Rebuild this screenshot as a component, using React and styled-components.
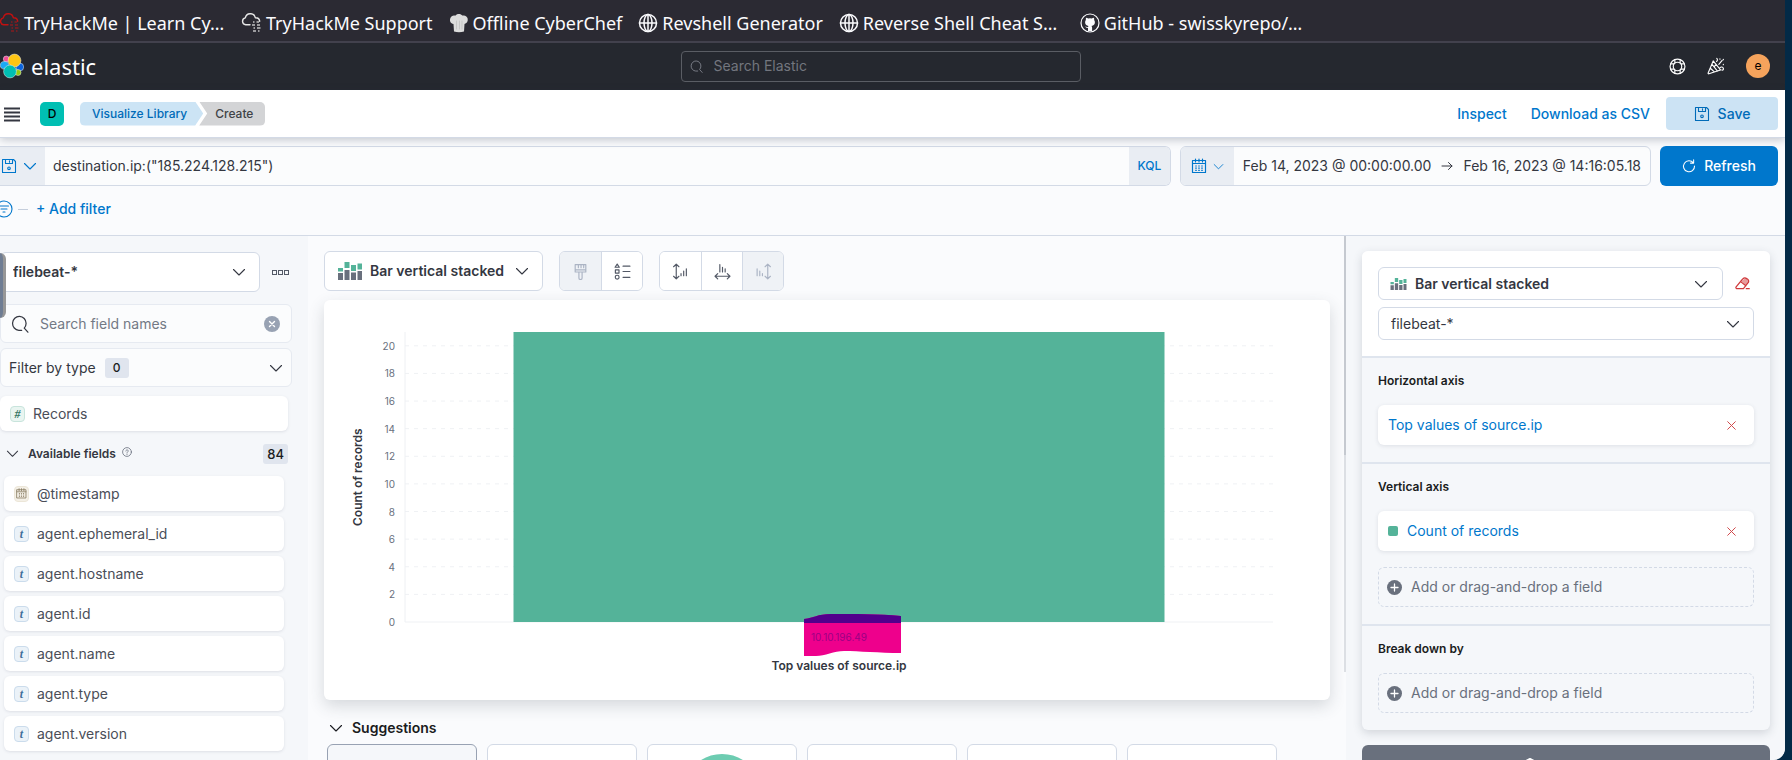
import React from "react";
import styled, { createGlobalStyle, css } from "styled-components";

const Global = createGlobalStyle`
  *, *::before, *::after { box-sizing: border-box; }
  body { margin: 0; background: #032a47; font-family: Inter, "Liberation Sans", sans-serif; font-size: 14px; line-height: 20px; color: #343741; }
  button, input, select { font: inherit; color: inherit; margin: 0; padding: 0; border: 0; background: none; }
  button { cursor: pointer; }
  a { text-decoration: none; }
  svg { display: block; flex: none; }
  h1, h2, h3, ul { margin: 0; padding: 0; font-size: inherit; }
  ul { list-style: none; }
`;

const blue = "#0077cc";
const line = "#d3dae6";

const Shell = styled.div`
  height: 100vh;
  margin-right: 7px;
  display: flex;
  flex-direction: column;
  overflow: hidden;
  border-radius: 0 0 12px 0;
  background: #fafbfd;
`;

/* ---------- bookmarks ---------- */
const Bookmarks = styled.nav`
  display: flex;
  gap: 16px;
  height: 43px;
  padding-top: 5px;
  align-items: center;
  flex: none;
  background: #2b2a33;
  border-bottom: 2px solid #42414d;
`;
const Bookmark = styled.a`
  display: flex;
  align-items: center;
  gap: 4px;
  color: #fbfbfe;
  font: 18px/24px "Noto Sans", sans-serif;
  white-space: nowrap;
`;
const BookmarkLabel = styled.span`
  min-width: ${(p) => (p.$fixed ? "201px" : "0")};
`;

/* ---------- global header ---------- */
const Header = styled.header`
  display: grid;
  grid-template-columns: 1fr 400px 1fr;
  align-items: center;
  height: 47px;
  flex: none;
  padding-right: 24px;
  padding-bottom: 1px;
  background: #25282f;
`;
const Brand = styled.a`
  display: flex;
  align-items: center;
  gap: 7px;
  color: #fff;
  font: 22px/28px "Noto Sans", sans-serif;
`;
const HeaderSearch = styled.label`
  display: flex;
  align-items: center;
  gap: 11px;
  height: 31px;
  padding: 0 8px;
  border: 1px solid #5a5d64;
  border-radius: 4px;
  color: #81858f;
  input { flex: 1; min-width: 0; outline: 0; }
  input::placeholder { color: #73767e; opacity: 1; }
`;
const HeaderTools = styled.div`
  display: flex;
  justify-content: flex-end;
  align-items: center;
  gap: 21px;
  margin-right: -9px;
  color: #fff;
  button { display: flex; }
`;
const Avatar = styled.button`
  width: 24px;
  height: 24px;
  justify-content: center;
  border-radius: 50%;
  background: #f5a35c;
  color: #000;
  font-size: 12px;
  line-height: 24px;
`;

/* ---------- breadcrumb bar ---------- */
const AppBar = styled.div`
  display: flex;
  align-items: center;
  height: 48px;
  flex: none;
  padding: 0 7px 0 4px;
  background: #fff;
  border-bottom: 1px solid ${line};
  box-shadow: 0 2px 8px rgba(40, 50, 70, 0.25);
  z-index: 1;
`;
const MenuButton = styled.button`
  display: flex;
  margin-right: 20px;
`;
const Space = styled.span`
  width: 24px;
  height: 24px;
  margin-right: 16px;
  border-radius: 5px;
  background: #00bfb3;
  color: #000;
  font-size: 12px;
  font-weight: 500;
  line-height: 24px;
  text-align: center;
`;
const Crumbs = styled.nav`
  display: flex;
  font-size: 12px;
  font-weight: 500;
  line-height: 24px;
`;
const Crumb = styled.a`
  padding: 0 16px 0 12px;
  color: #006bb8;
  background: #cce4f5;
  border-radius: 5px 0 0 5px;
  clip-path: polygon(0 0, calc(100% - 8px) 0, 100% 50%, calc(100% - 8px) 100%, 0 100%);
  ${(p) =>
    p.$last &&
    css`
      margin-left: -4px;
      padding: 0 12px 0 16px;
      color: #404347;
      background: #d3d4d6;
      border-radius: 0 5px 5px 0;
      clip-path: polygon(0 0, 100% 0, 100% 100%, 0 100%, 8px 50%);
    `}
`;
const AppActions = styled.div`
  display: flex;
  align-items: center;
  gap: 24px;
  margin-left: auto;
  color: ${blue};
  font-weight: 500;
`;
const SaveButton = styled.button`
  display: flex;
  align-items: center;
  justify-content: center;
  gap: 8px;
  width: 112px;
  height: 33px;
  margin-left: -8px;
  border-radius: 4px;
  background: #cce3f4;
  color: #006bb8;
  font-weight: 500;
`;

/* ---------- query ---------- */
const QueryArea = styled.section`
  flex: none;
  height: 98px;
  padding: 8px 7px 0 0;
  border-bottom: 1px solid ${line};
  background: #fafbfd;
`;
const QueryRow = styled.div`
  display: flex;
  height: 40px;
  gap: 9px;
`;
const Box = styled.div`
  display: flex;
  flex: ${(p) => (p.$grow ? 1 : "none")};
  border: 1px solid ${line};
  border-radius: ${(p) => (p.$grow ? "0 6px 6px 0" : "6px")};
  border-left-width: ${(p) => (p.$grow ? 0 : "1px")};
  overflow: hidden;
  background: #fbfcfd;
`;
const Append = styled.button`
  display: flex;
  align-items: center;
  justify-content: center;
  gap: 6px;
  width: ${(p) => p.$w}px;
  padding-right: ${(p) => (p.$edge ? "8px" : "0")} !important;
  background: #e9edf3;
  color: ${blue};
  font-size: 12px;
  font-weight: 500;
`;
const QueryInput = styled.input`
  flex: 1;
  padding: 0 8px !important;
  outline: 0;
`;
const Dates = styled.div`
  display: flex;
  align-items: center;
  justify-content: space-between;
  gap: 10px;
  padding: 0 9px;
  button { white-space: nowrap; }
`;
const Refresh = styled.button`
  display: flex;
  align-items: center;
  justify-content: center;
  gap: 8px;
  width: 118px;
  border-radius: 6px;
  background: #0077cc;
  color: #fff;
  font-weight: 500;
`;
const FilterRow = styled.div`
  display: flex;
  align-items: center;
  gap: 5px;
  height: 46px;
`;
const Dash = styled.span`
  width: 10px;
  height: 1px;
  margin-right: 3px;
  background: #c5cedc;
`;
const AddFilter = styled.button`
  color: ${blue};
  font-weight: 500;
`;

/* ---------- workspace ---------- */
const Workspace = styled.div`
  display: flex;
  flex: 1;
  min-height: 0;
`;
const Sidebar = styled.aside`
  position: relative;
  width: 308px;
  flex: none;
  padding: 16px 16px 0 0;
  overflow: hidden;
  background: #f5f7fa;
`;
const Handle = styled.div`
  position: absolute;
  left: 0;
  top: 17px;
  width: 6px;
  height: 65px;
  border-radius: 0 6px 6px 0;
  background: #6f7d93;
  border-right: 3px solid #979797;
`;
const PatternRow = styled.div`
  display: flex;
  align-items: center;
  gap: 12px;
  margin-bottom: 12px;
`;
const SelectWrap = styled.label`
  position: relative;
  display: flex;
  align-items: center;
  width: ${(p) => p.$w || "100%"};
  height: ${(p) => p.$h}px;
  border: 1px solid ${line};
  border-radius: 6px;
  background: #fff;
  font-weight: ${(p) => (p.$bold ? 600 : 400)};
  select { appearance: none; width: 100%; height: 100%; padding: 0 12px; outline: 0; }
  svg { position: absolute; right: 13px; pointer-events: none; }
`;
const More = styled.button`
  display: flex;
  gap: 1px;
`;
const MoreDot = styled.i`
  width: 5px;
  height: 5px;
  border: 1px solid #535966;
`;
const FieldSearch = styled.label`
  display: flex;
  align-items: center;
  gap: 11px;
  height: 39px;
  padding: 0 11px 0 10px;
  margin-bottom: 5px;
  border: 1px solid #e6eaf1;
  border-radius: 6px;
  background: #fbfcfd;
  input { flex: 1; min-width: 0; outline: 0; }
  input::placeholder { color: #737985; opacity: 1; }
`;
const Clear = styled.button`
  display: flex;
`;
const TypeFilter = styled.button`
  display: flex;
  align-items: center;
  gap: 9px;
  width: 100%;
  height: 39px;
  padding: 0 8px !important;
  margin-bottom: 9px !important;
  border: 1px solid #e6eaf1 !important;
  border-radius: 6px;
  background: #fbfcfd !important;
  > svg { margin-left: auto; }
`;
const Count = styled.span`
  min-width: 24px;
  padding: 0 4px;
  border-radius: 3px;
  background: #e0e5ee;
  color: #1a1c21;
  font-size: ${(p) => (p.$small ? 12 : 13)}px;
  font-weight: 500;
  line-height: 20px;
  text-align: center;
`;
const Field = styled.button`
  display: flex;
  align-items: center;
  gap: 8px;
  width: 100%;
  height: 35px;
  padding: 0 10px !important;
  border-radius: 6px;
  background: #fff !important;
  box-shadow: 0 1px 3px rgba(60, 70, 90, 0.13);
  color: #4a4e58 !important;
`;
const FieldToken = styled.span`
  display: flex;
  align-items: center;
  justify-content: center;
  width: 15px;
  height: 16px;
  border: 1px solid ${(p) => p.$b};
  border-radius: 4px;
  background: ${(p) => p.$bg};
  color: ${(p) => p.$c};
  font: italic 700 12px/14px "Liberation Serif", serif;
`;
const RecordsWrap = styled.div`
  padding-right: 4px;
`;
const SectionHead = styled.h2`
  display: flex;
  align-items: center;
  height: 45px;
  padding: 0 4px 0 6px;
  font-size: 12px;
  font-weight: 600;
  button { display: flex; align-items: center; gap: 9px; flex: 1; }
`;
const Info = styled.span`
  height: 14px;
  margin-left: -3px;
`;
const FieldList = styled.ul`
  display: grid;
  gap: 5px;
  padding: 0 8px 0 4px;
`;

/* ---------- editor ---------- */
const Editor = styled.main`
  flex: 1;
  min-width: 0;
  padding: 15px 14px 0 16px;
  overflow: hidden;
  background: #fafbfd;
`;
const Divider = styled.div`
  width: 2px;
  height: 436px;
  flex: none;
  background: linear-gradient(#c5c9d0 0 219px, #dcdfe4 219px);
`;
const Toolbar = styled.div`
  display: flex;
  gap: 16px;
  margin-bottom: 9px;
`;
const Group = styled.div`
  display: flex;
  height: 40px;
  border: 1px solid ${line};
  border-radius: 6px;
  overflow: hidden;
  background: #fff;
  button + button { border-left: 1px solid ${line}; }
`;
const TypeButton = styled.button`
  display: flex;
  align-items: center;
  gap: 8px;
  padding: 0 13px !important;
  font-weight: 600;
  > svg:last-child { margin-left: 3px; }
`;
const ToolButton = styled.button`
  display: flex;
  align-items: center;
  justify-content: center;
  width: 41px;
  color: ${(p) => (p.disabled ? "#abb4c4" : "#535966")};
  background: ${(p) => (p.disabled ? "#eff2f6" : "#fff")};
`;
const ChartCard = styled.figure`
  display: grid;
  grid-template-columns: 20px 1fr;
  column-gap: 37px;
  height: 400px;
  margin: 0 0 16px;
  padding: 32px 57px 0 24px;
  align-content: start;
  border-radius: 6px;
  background: #fff;
  box-shadow: 0 6px 16px rgba(50, 60, 70, 0.18);
`;
const YTitle = styled.div`
  display: flex;
  align-items: center;
  justify-content: center;
  writing-mode: vertical-rl;
  transform: rotate(180deg);
  height: 290px;
  font-size: 12px;
  font-weight: 600;
`;
const Plot = styled.svg`
  width: 100%;
  height: 290px;
  overflow: visible;
  font-size: 10px;
`;
const XTitle = styled.figcaption`
  grid-column: 2;
  margin-top: 34px;
  font-size: 12px;
  font-weight: 600;
  text-align: center;
`;
const SuggestionsHead = styled.button`
  display: flex;
  align-items: center;
  gap: 9px;
  height: 24px;
  padding-left: 5px !important;
  margin-bottom: 4px !important;
  font-weight: 600;
  color: #1a1c21 !important;
`;
const Suggestions = styled.div`
  display: flex;
  gap: 10px;
  padding-left: 3px;
`;
const Suggestion = styled.button`
  display: flex;
  align-items: flex-start;
  justify-content: center;
  width: 150px;
  height: 96px;
  padding-top: 9px !important;
  flex: none;
  border: 1px solid ${(p) => (p.$active ? "#98a2b3" : line)} !important;
  border-radius: 6px;
  background: ${(p) => (p.$active ? "#f5f7fa" : "#fff")} !important;
`;

/* ---------- configuration ---------- */
const Config = styled.aside`
  width: 439px;
  flex: none;
  padding: 15px 15px 0 16px;
  overflow: hidden;
  background: #f5f7fa;
`;
const Layer = styled.section`
  margin-bottom: 15px;
  border-radius: 6px;
  overflow: hidden;
  box-shadow: 0 3px 10px rgba(50, 60, 80, 0.18);
`;
const LayerHead = styled.div`
  display: grid;
  gap: 7px;
  padding: 16px;
  background: #fff;
`;
const LayerTypeRow = styled.div`
  display: flex;
  align-items: center;
  gap: 12px;
  padding-right: 4px;
  button { display: flex; }
`;
const LayerType = styled.button`
  align-items: center;
  gap: 8px;
  flex: 1;
  height: 33px;
  padding: 0 14px 0 11px !important;
  border: 1px solid ${line} !important;
  border-radius: 6px;
  font-weight: 600;
  > svg:last-child { margin-left: auto; }
`;
const Dimension = styled.div`
  display: grid;
  gap: 16px;
  padding: 13px 16px 17px;
  border-top: 2px solid #dfe5ee;
`;
const DimTitle = styled.h3`
  margin-bottom: -2px;
  font-size: 12px;
  font-weight: 600;
  line-height: 20px;
  color: #1a1c21;
`;
const DimItem = styled.div`
  display: flex;
  align-items: center;
  gap: 9px;
  height: 40px;
  padding: 0 18px 0 10px;
  border-radius: 6px;
  background: #fff;
  box-shadow: 0 1px 4px rgba(60, 70, 90, 0.13);
  a { flex: 1; color: ${blue}; }
  button { display: flex; }
`;
const Swatch = styled.i`
  width: 10px;
  height: 10px;
  border-radius: 2px;
  background: #54b399;
`;
const DropZone = styled.button`
  display: flex;
  align-items: center;
  gap: 9px;
  height: 40px;
  padding: 0 8px !important;
  border: 1px dashed ${line} !important;
  border-radius: 6px;
  color: #69707d !important;
`;
const AddLayer = styled.button`
  display: flex;
  align-items: center;
  justify-content: center;
  width: 100%;
  height: 40px;
  padding-right: 72px !important;
  border-radius: 6px;
  background: #69707d !important;
  color: #fff !important;
`;

/* ---------- icons ---------- */
const Icon = ({ s = 16, w, h, vb = "0 0 16 16", sw = 1, children, ...rest }) => (
  <svg width={w || s} height={h || s} viewBox={vb} fill="none" stroke="currentColor" strokeWidth={sw} strokeLinecap="round" strokeLinejoin="round" aria-hidden="true" {...rest}>
    {children}
  </svg>
);
const Chevron = ({ c = "currentColor", s = 14 }) => (
  <Icon s={s} vb="0 0 14 14" sw={1.100} stroke={c}><path d="M1.500 4.500 7 10l5.500-5.500" /></Icon>
);
const Globe = () => (
  <Icon s={20} vb="0 0 20 20" sw={1.500}>
    <circle cx="10" cy="10" r="8.500" /><ellipse cx="10" cy="10" rx="4" ry="8.500" /><path d="M10 1.500v17M1.500 10h17" />
  </Icon>
);
const Cloud = ({ c, left }) => (
  <Icon w={left ? 20 : 21} h={22} vb={left ? "1 0 20 22" : "0 0 21 22"} sw={1.400} stroke={c}>
    <path d="M9 12.800H4.700a3.500 3.500 0 0 1-.4-6.900C5 2.500 7.700 1.500 10 1.800c2.300.3 3.800 1.700 4.300 3.900 2.300-.1 4.200 1.200 4.400 3.600" />
    <path d="M12 10h1.500m2 0h2.500M11 13h3m2 0h3M12.500 16h1.500m2 0h3.500M12 19h3m2 0h1.500" strokeWidth="2" strokeLinecap="butt" opacity={left ? 0.45 : 0.6} />
  </Icon>
);
const ChefHat = () => (
  <Icon s={20} vb="0 0 20 20" stroke="none">
    <path fill="#dcdcdc" d="M5 18.500 4.500 11C1.500 10.500.500 8 1.200 5.500 2 3 4.500 2 6.300 2.800 7.500.500 12 .300 13.300 2.600c2.600-.8 5 .8 5.400 3.100.400 2.700-1 4.700-3.200 5.300L15 18.500c-3 1-7 1-10 0Z" />
    <path d="M7.500 8v8M10.500 8v8M13 8v8" stroke="#bcbcbc" strokeWidth=".7" />
  </Icon>
);
const GitHub = () => (
  <Icon s={20} vb="0 0 20 20" stroke="none">
    <circle cx="10" cy="10" r="9" stroke="#fbfbfe" strokeWidth="1.200" />
    <path fill="#fbfbfe" d="M8 18v-3c-1.500.3-2.200-.4-2.700-1.400 1 0 1.300.8 2.700.5.100-.5.300-.8.500-1-2.200-.4-3.400-1.500-3.400-3.800 0-.9.300-1.700.8-2.300-.2-.6-.2-1.500.2-2.200.8 0 1.500.4 2.100.8a7 7 0 0 1 3.600 0c.6-.4 1.300-.8 2.100-.8.400.7.400 1.600.2 2.200.5.600.8 1.400.8 2.300 0 2.300-1.200 3.400-3.400 3.800.4.400.6.900.6 1.700V18Z" />
  </Icon>
);
const ElasticLogo = () => (
  <svg width="24" height="26" viewBox="0 0 24 26" aria-hidden="true">
    <g stroke="#e8eef0" strokeWidth=".5">
      <circle cx="6.300" cy="6" r="3" fill="#f04e98" />
      <ellipse cx="4.500" cy="12.300" rx="4.200" ry="3.800" fill="#1ba9f5" />
      <ellipse cx="19.800" cy="14" rx="3.900" ry="3.900" fill="#0b64dd" />
      <circle cx="18" cy="19.500" r="3" fill="#93c90e" />
      <circle cx="14.500" cy="7.500" r="6.400" fill="#fec514" />
      <circle cx="10" cy="18.500" r="6.400" fill="#00bfb3" />
    </g>
  </svg>
);
const Search = ({ s = 16 }) => (
  <Icon s={s} sw={1.100}><path d="M9.500 13.600H7A6 6.200 0 1 1 13.400 7.500c0 1.800-.6 3-1.600 4.200l3.200 3.600" /></Icon>
);
const SaveIcon = () => (
  <Icon sw={1.100}>
    <path d="M1.500 1.500h11l2 2v11h-13zM4.500 1.500v4h7v-4M8.500 2.800v1.400" /><circle cx="8" cy="10.300" r="1.300" />
  </Icon>
);
const Calendar = ({ s = 16 }) => (
  <Icon s={s} sw={1.200}><path d="M1.500 2.500h13v12h-13zM1.500 5.500h13M4.500 1v3M8 1v3M11.500 1v3" /><path d="M4.200 8h7.600M4.200 10.200h7.600M4.200 12.300h7.600" strokeDasharray="1.600 1.400" strokeLinecap="butt" /></Icon>
);
const BarStacked = ({ w = 24, h = 18 }) => (
  <svg width={w} height={h} viewBox="0 0 24 18" aria-hidden="true">
    <path fill="#69707d" d="M0 11h5v7H0zM6.500 8h5v10h-5zM13 10.500h5V18h-5zM19.500 9h4.500v9h-4.500z" />
    <path fill="#54b399" d="M0 6h5v3.500H0zM6.500 0h5v6h-5zM13 3h5v6h-5zM19.500 1.500H24V7.500h-4.500z" />
  </svg>
);
const Help = () => (
  <Icon s={17} sw={1.100}>
    <circle cx="8" cy="8" r="7" /><circle cx="8" cy="8" r="4" />
    <path d="M5.500 1.600v3.200M10.500 1.600v3.200M5.500 11.200v3.200M10.500 11.200v3.200M1.600 5.500h3.200M11.200 5.500h3.200M1.600 10.500h3.200M11.200 10.500h3.200" />
  </Icon>
);
const Cheer = () => (
  <Icon s={18} sw={1}>
    <path d="M5.500 3.500 1 14.200c-.2.500.2.900.7.700L12 11.500zM4.500 6.500l4.800 6M3 10l3.500 3.300M8 6.500 6.500 8.500" />
    <path d="M8.500 4c1-.7 1-1.900.2-2.800M10.500 6.500l3-3.500M11.500 9.500c1-1 2.500-.8 3 .5s-.5 2-1.300 1.500M11.500 1.500v.4M14.500 2v.4M14.500 6.500v.4" />
  </Icon>
);
const RefreshIcon = () => (
  <Icon s={14} sw={1.200}><path d="M13 4.500A6.300 6.300 0 1 0 14.300 8M13.300 1v3.700H9.700" /></Icon>
);
const FilterIcon = () => (
  <Icon w={13} h={18} vb="5 0 13 18" sw={1.100} stroke={blue}>
    <circle cx="9" cy="9" r="8" /><path d="M4.500 6h9M6 9h6M8 12h2" />
  </Icon>
);
const Brush = () => (
  <Icon s={17} sw={1.100}><path d="M3 1.500h10v7H3zM3 6.500h10M6 1.500v3M8.500 1.500v3M11 1.500v3M6.500 8.500v5.500a1.500 1.500 0 0 0 3 0V8.500" /></Icon>
);
const Legend = () => (
  <Icon s={17} sw={1.100}><path d="m3 1 2 3H1zM1.300 6.500h3.400v3H1.300zM8.500 3h6.500M8.500 8h6.500M8.500 13.500h6.500" /><circle cx="3" cy="13.300" r="1.800" /></Icon>
);
const AxisLeft = () => (
  <Icon s={17} sw={1.100}><path d="M4 1.200v13.600M1.500 3.500 4 1l2.500 2.500M1.500 12.500 4 15l2.500-2.500M8.500 12v-2M11 12V7.500M13.500 12V5.500" /></Icon>
);
const AxisBottom = () => (
  <Icon s={17} sw={1.100}><path d="M1.200 12.500h13.600M3.500 10 1 12.500 3.500 15M12.500 10l2.500 2.500-2.500 2.500M5.500 8.500v-7M8 8.500V4M10.500 8.500v-3" /></Icon>
);
const AxisRight = () => (
  <Icon s={17} sw={1.100}><path d="M12 1.200v13.600M9.500 3.500 12 1l2.500 2.500M9.500 12.500 12 15l2.500-2.500M2 12V5.500M4.500 12V7.500M7 12v-2" /></Icon>
);
const Eraser = () => (
  <Icon s={15} sw={1.300} stroke="#d0393b">
    <path d="M1.200 11.500 7.500 4c1-1.500 2.500-2.500 4-1.700l1.800 1c1.500.9 1.700 2.700.5 4.100L9 13.500H2.700c-1.500 0-2.200-1-1.500-2ZM6 6l5.500 4.500M12 13.500h3.200" />
    <path d="M7 5.500 11 2l4 3.300-3.800 5.200Z" fill="#d0393b" fillOpacity=".5" stroke="none" />
  </Icon>
);
const Cross = () => (
  <Icon s={9} vb="0 0 9 9" stroke="#d0494b"><path d="m.7.700 7.600 7.600M8.300.700.700 8.300" /></Icon>
);
const PlusCircle = () => (
  <Icon s={15} vb="0 0 15 15" sw={1.300}><circle cx="7.500" cy="7.500" r="7.500" fill="#69707d" stroke="none" /><path d="M7.500 4v7M4 7.500h7" stroke="#fff" /></Icon>
);
const Question = () => (
  <Icon s={10} vb="0 0 10 10" sw={0.800} stroke="#69707d"><circle cx="5" cy="5" r="4.400" /><path d="M3.800 4c0-1.600 2.500-1.500 2.400 0 0 .9-1.200.9-1.200 2M5 7.300v.2" /></Icon>
);

/* ---------- data ---------- */
const bookmarks = [
  { label: "TryHackMe | Learn Cy…", icon: <Cloud c="#c11111" left />, fixed: true },
  { label: "TryHackMe Support", icon: <Cloud c="#e8e8e8" /> },
  { label: "Offline CyberChef", icon: <ChefHat /> },
  { label: "Revshell Generator", icon: <Globe /> },
  { label: "Reverse Shell Cheat S…", icon: <Globe />, fixed: true },
  { label: "GitHub - swisskyrepo/…", icon: <GitHub />, fixed: true },
];
const fields = ["agent.ephemeral_id", "agent.hostname", "agent.id", "agent.name", "agent.type", "agent.version"];
const ticks = [0, 2, 4, 6, 8, 10, 12, 14, 16, 18, 20];
const PLOT_H = 290;
const yOf = (v) => PLOT_H * (1 - v / 21);

const Chart = () => (
  <ChartCard>
    <YTitle>Count of records</YTitle>
    <Plot role="img" aria-label="Count of records by source.ip">
      {ticks.map((t) => (
        <g key={t}>
          <line x1="0" x2="100%" y1={yOf(t)} y2={yOf(t)} stroke="#eff1f4" strokeDasharray={t ? "4 5" : "none"} />
          <text x="-10" y={yOf(t) + 4} textAnchor="end" fill="#69707d">{t}</text>
        </g>
      ))}
      <line x1="0" x2="0" y1="0" y2={PLOT_H} stroke="#eef0f3" />
      <rect x="12.5%" width="75%" y="0" height={PLOT_H} fill="#54b399" />
      <svg x="50%" y={PLOT_H} overflow="visible">
        <path fill="#ee008c" d="M-35-3C-25-4-22-8-8-8 15-8 40-8 62-6V31C40 31 20 29 5 29-5 29-14 34-23 34H-35Z" />
        <path fill="#52008c" d="M-35-3C-25-4-22-8-8-8 15-8 40-8 62-6V1H-35Z" />
        <text x="-28" y="19" fill="#9c0084">10.10.196.49</text>
      </svg>
    </Plot>
    <XTitle>Top values of source.ip</XTitle>
  </ChartCard>
);

const EmptyDimension = () => (
  <DropZone><PlusCircle />Add or drag-and-drop a field</DropZone>
);

export default function App() {
  return (
    <>
      <Global />
      <Shell>
        <Bookmarks aria-label="Bookmarks">
          {bookmarks.map((b) => (
            <Bookmark key={b.label} href="#">
              {b.icon}
              <BookmarkLabel $fixed={b.fixed}>{b.label}</BookmarkLabel>
            </Bookmark>
          ))}
        </Bookmarks>

        <Header>
          <Brand href="#"><ElasticLogo />elastic</Brand>
          <HeaderSearch>
            <Search s={13} />
            <input aria-label="Search Elastic" placeholder="Search Elastic" />
          </HeaderSearch>
          <HeaderTools>
            <button aria-label="Help"><Help /></button>
            <button aria-label="What's new"><Cheer /></button>
            <Avatar aria-label="Account">e</Avatar>
          </HeaderTools>
        </Header>

        <AppBar>
          <MenuButton aria-label="Toggle navigation">
            <Icon s={16} sw={1.900} strokeLinecap="butt"><path d="M0 2.500h16M0 6.500h16M0 10.500h16M0 14.500h16" /></Icon>
          </MenuButton>
          <Space>D</Space>
          <Crumbs aria-label="Breadcrumbs">
            <Crumb href="#">Visualize Library</Crumb>
            <Crumb as="span" $last>Create</Crumb>
          </Crumbs>
          <AppActions>
            <button>Inspect</button>
            <button>Download as CSV</button>
            <SaveButton><SaveIcon />Save</SaveButton>
          </AppActions>
        </AppBar>

        <QueryArea>
          <QueryRow>
            <Box $grow>
              <Append $w={45} $edge aria-label="Saved queries"><SaveIcon /><Chevron /></Append>
              <QueryInput aria-label="Query" defaultValue={'destination.ip:("185.224.128.215")'} />
              <Append $w={41}>KQL</Append>
            </Box>
            <Box>
              <Append $w={53} aria-label="Quick select"><Calendar /><Chevron s={11} /></Append>
              <Dates>
                <button>Feb 14, 2023 @ 00:00:00.00</button>
                <Icon s={12} vb="0 0 12 12"><path d="M1 6h10M7.500 2.500 11 6 7.500 9.500" /></Icon>
                <button>Feb 16, 2023 @ 14:16:05.18</button>
              </Dates>
            </Box>
            <Refresh><RefreshIcon />Refresh</Refresh>
          </QueryRow>
          <FilterRow>
            <FilterIcon />
            <Dash />
            <AddFilter>+ Add filter</AddFilter>
          </FilterRow>
        </QueryArea>

        <Workspace>
          <Sidebar>
            <PatternRow>
              <SelectWrap $w="260px" $h={40} $bold>
                <select aria-label="Data view"><option>filebeat-*</option></select>
                <Chevron />
              </SelectWrap>
              <More aria-label="More actions"><MoreDot /><MoreDot /><MoreDot /></More>
            </PatternRow>
            <FieldSearch>
              <Search s={18} />
              <input aria-label="Search field names" placeholder="Search field names" />
              <Clear aria-label="Clear">
                <Icon vb="0 0 16 16"><circle cx="8" cy="8" r="8" fill="#98a2b3" stroke="none" /><path d="m5.500 5.500 5 5m0-5-5 5" stroke="#fff" strokeWidth="1.400" /></Icon>
              </Clear>
            </FieldSearch>
            <TypeFilter>Filter by type<Count $small>0</Count><Chevron /></TypeFilter>
            <RecordsWrap>
              <Field><FieldToken $b="#c8e4dc" $bg="#e9f5f1" $c="#387765">#</FieldToken>Records</Field>
            </RecordsWrap>
            <SectionHead>
              <button><Chevron s={13} />Available fields<Info><Question /></Info></button>
              <Count>84</Count>
            </SectionHead>
            <FieldList>
              <li><Field><FieldToken $b="#ece6d8" $bg="#f4f0e7" $c="#897d62"><Calendar s={11} /></FieldToken>@timestamp</Field></li>
              {fields.map((f) => (
                <li key={f}><Field><FieldToken $b="#cbdcec" $bg="#ebf2f8" $c="#3f6f9b">t</FieldToken>{f}</Field></li>
              ))}
            </FieldList>
            <Handle />
          </Sidebar>

          <Editor>
            <Toolbar>
              <Group><TypeButton><BarStacked />Bar vertical stacked<Chevron /></TypeButton></Group>
              <Group>
                <ToolButton disabled aria-label="Visual options"><Brush /></ToolButton>
                <ToolButton aria-label="Legend"><Legend /></ToolButton>
              </Group>
              <Group>
                <ToolButton aria-label="Left axis"><AxisLeft /></ToolButton>
                <ToolButton aria-label="Bottom axis"><AxisBottom /></ToolButton>
                <ToolButton disabled aria-label="Right axis"><AxisRight /></ToolButton>
              </Group>
            </Toolbar>
            <Chart />
            <SuggestionsHead><Chevron />Suggestions</SuggestionsHead>
            <Suggestions>
              <Suggestion $active aria-label="Current visualization" />
              <Suggestion aria-label="Suggestion 1" />
              <Suggestion aria-label="Donut">
                <svg width="78" height="78" viewBox="0 0 78 78"><circle cx="39" cy="39" r="30" fill="none" stroke="#6dccb1" strokeWidth="18" /></svg>
              </Suggestion>
              <Suggestion aria-label="Suggestion 3" />
              <Suggestion aria-label="Suggestion 4" />
              <Suggestion aria-label="Suggestion 5" />
            </Suggestions>
          </Editor>
          <Divider />

          <Config>
            <Layer>
              <LayerHead>
                <LayerTypeRow>
                  <LayerType><BarStacked w={17} h={12} />Bar vertical stacked<Chevron /></LayerType>
                  <button aria-label="Reset layer"><Eraser /></button>
                </LayerTypeRow>
                <SelectWrap $h={33}>
                  <select aria-label="Layer data view"><option>filebeat-*</option></select>
                  <Chevron />
                </SelectWrap>
              </LayerHead>
              <Dimension>
                <DimTitle>Horizontal axis</DimTitle>
                <DimItem><a href="#">Top values of source.ip</a><button aria-label="Remove"><Cross /></button></DimItem>
              </Dimension>
              <Dimension>
                <DimTitle>Vertical axis</DimTitle>
                <DimItem><Swatch /><a href="#">Count of records</a><button aria-label="Remove"><Cross /></button></DimItem>
                <EmptyDimension />
              </Dimension>
              <Dimension>
                <DimTitle>Break down by</DimTitle>
                <EmptyDimension />
              </Dimension>
            </Layer>
            <AddLayer aria-label="Add layer"><Icon s={14} sw={2} vb="0 0 14 14"><path d="m7 1 6 3-6 3-6-3zM1 8l6 3 6-3" /></Icon></AddLayer>
          </Config>
        </Workspace>
      </Shell>
    </>
  );
}
